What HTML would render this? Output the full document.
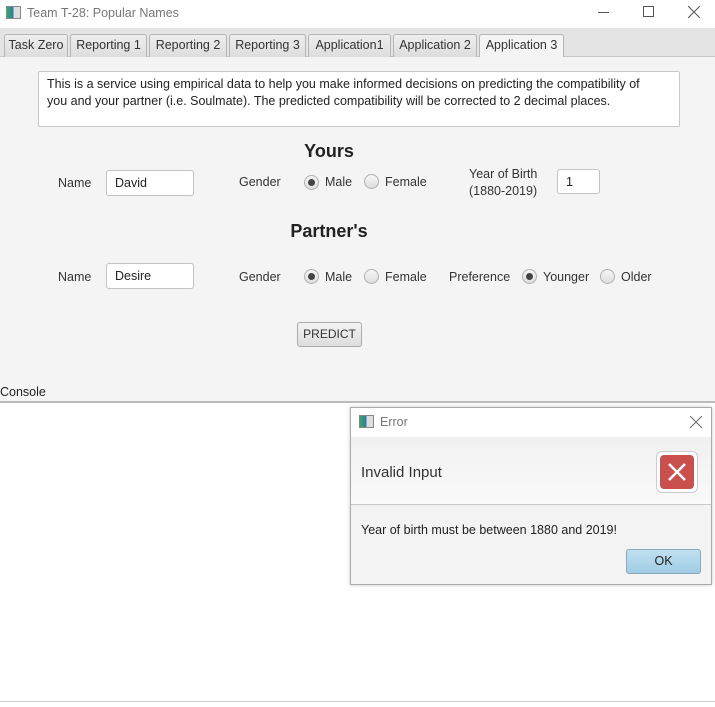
<!DOCTYPE html>
<html><head><style>
*{margin:0;padding:0;box-sizing:border-box}
body{width:715px;height:707px;position:relative;overflow:hidden;background:#fff;font-family:"Liberation Sans",sans-serif;font-size:12.5px;color:#333}
.a{position:absolute;white-space:nowrap}
.tab{position:absolute;top:34px;height:23px;border:1px solid #b5b5b5;border-bottom:none;background:linear-gradient(#eee,#ddd);border-radius:3px 3px 0 0;font-size:12.5px;line-height:21px;text-align:center;color:#333}
.inp{position:absolute;background:#fff;border:1px solid #c3c3c3;border-radius:3px;padding-left:8px;line-height:24px;color:#222}
.rad{position:absolute;width:15px;height:15px;border-radius:50%;border:1px solid #b0b0b0;background:linear-gradient(#f6f6f6,#ddd)}
.rad.on::after{content:"";position:absolute;left:3px;top:3px;width:7px;height:7px;border-radius:50%;background:#444}
</style></head><body>
<div class="a" style="left:0;top:0;width:715px;height:28px;background:#fff"></div>
<div class="a" style="left:6px;top:6px;width:15px;height:13px;border:1px solid #888;background:linear-gradient(90deg,#3a6 0,#37a 50%,#ddd 50%)"></div>
<div class="a" style="left:27px;top:6px;color:#777;font-size:12.5px">Team T-28: Popular Names</div>
<div class="a" style="left:598px;top:12px;width:11px;height:1px;background:#555"></div>
<div class="a" style="left:643px;top:6px;width:11px;height:11px;border:1px solid #555"></div>
<svg class="a" style="left:688px;top:6px" width="12" height="12"><path d="M0 0L12 12M12 0L0 12" stroke="#555" stroke-width="1"/></svg>
<div class="a" style="left:0;top:28px;width:715px;height:29px;background:#e4e4e4;border-bottom:1px solid #c8c8c8"></div>
<div class="tab" style="left:4px;width:64px">Task Zero</div>
<div class="tab" style="left:70px;width:77px">Reporting 1</div>
<div class="tab" style="left:149px;width:78px">Reporting 2</div>
<div class="tab" style="left:229px;width:77px">Reporting 3</div>
<div class="tab" style="left:308px;width:83px">Application1</div>
<div class="tab" style="left:393px;width:84px">Application 2</div>
<div class="tab" style="left:479px;width:85px;background:#f4f4f4;height:24px">Application 3</div>
<div class="a" style="left:0;top:57px;width:715px;height:344px;background:#f4f4f4"></div>
<div class="a" style="left:38px;top:71px;width:642px;height:56px;background:#fff;border:1px solid #c8c8c8;border-radius:2px;padding:4px 0 0 8px;line-height:17px;font-size:12.5px;color:#222">This is a service using empirical data to help you make informed decisions on predicting the compatibility of<br>you and your partner (i.e. Soulmate). The predicted compatibility will be corrected to 2 decimal places.</div>
<div class="a" style="left:329px;top:141px;transform:translateX(-50%);font-size:18px;font-weight:bold;color:#222">Yours</div>
<div class="a" style="left:58px;top:176px">Name</div>
<div class="inp" style="left:106px;top:170px;width:88px;height:26px">David</div>
<div class="a" style="left:239px;top:175px">Gender</div>
<div class="rad on" style="left:304px;top:175px"></div><div class="a" style="left:325px;top:175px">Male</div>
<div class="rad" style="left:364px;top:174px"></div><div class="a" style="left:385px;top:175px">Female</div>
<div class="a" style="left:469px;top:166px;line-height:17px">Year of Birth<br>(1880-2019)</div>
<div class="inp" style="left:557px;top:169px;width:43px;height:25px">1</div>
<div class="a" style="left:329px;top:221px;transform:translateX(-50%);font-size:18px;font-weight:bold;color:#222">Partner's</div>
<div class="a" style="left:58px;top:270px">Name</div>
<div class="inp" style="left:106px;top:263px;width:88px;height:26px">Desire</div>
<div class="a" style="left:239px;top:270px">Gender</div>
<div class="rad on" style="left:304px;top:269px"></div><div class="a" style="left:325px;top:270px">Male</div>
<div class="rad" style="left:364px;top:269px"></div><div class="a" style="left:385px;top:270px">Female</div>
<div class="a" style="left:449px;top:270px">Preference</div>
<div class="rad on" style="left:522px;top:269px"></div><div class="a" style="left:543px;top:270px">Younger</div>
<div class="rad" style="left:600px;top:269px"></div><div class="a" style="left:621px;top:270px">Older</div>
<div class="a" style="left:297px;top:322px;width:65px;height:25px;border:1px solid #aaa;border-radius:3px;background:linear-gradient(#f4f4f4,#ddd);text-align:center;line-height:23px;font-size:12px">PREDICT</div>
<div class="a" style="left:0;top:385px;color:#222">Console</div>
<div class="a" style="left:0;top:401px;width:715px;height:2px;background:#bbb"></div>
<div class="a" style="left:0;top:701px;width:715px;height:1px;background:#ccc"></div>
<div class="a" style="left:350px;top:407px;width:362px;height:178px;border:1px solid #aaa;background:#f3f3f3;box-shadow:0 0 4px rgba(0,0,0,.2)"></div>
<div class="a" style="left:351px;top:408px;width:360px;height:29px;background:#fff"></div>
<div class="a" style="left:359px;top:415px;width:15px;height:13px;border:1px solid #888;background:linear-gradient(90deg,#3a6 0,#37a 50%,#ddd 50%)"></div>
<div class="a" style="left:380px;top:415px;color:#777">Error</div>
<svg class="a" style="left:690px;top:416px" width="12" height="12"><path d="M0 0L12 12M12 0L0 12" stroke="#666" stroke-width="1"/></svg>
<div class="a" style="left:351px;top:437px;width:360px;height:68px;background:linear-gradient(#f0f0f0,#fafafa);border-bottom:1px solid #c8c8c8"></div>
<div class="a" style="left:361px;top:464px;font-size:15px;color:#333">Invalid Input</div>
<div class="a" style="left:656px;top:451px;width:42px;height:42px;border:1px solid #ccc;border-radius:6px;background:#fff"></div>
<div class="a" style="left:660px;top:455px;width:34px;height:34px;border-radius:4px;background:#c9504d"></div>
<svg class="a" style="left:668px;top:463px" width="18" height="18"><path d="M1 1L17 17M17 1L1 17" stroke="#fff" stroke-width="2.5"/></svg>
<div class="a" style="left:361px;top:523px;color:#222">Year of birth must be between 1880 and 2019!</div>
<div class="a" style="left:626px;top:549px;width:75px;height:25px;border:1px solid #8ab;border-radius:3px;background:linear-gradient(#bfe0f0,#a0cce4);text-align:center;line-height:23px;color:#222">OK</div>
</body></html>
